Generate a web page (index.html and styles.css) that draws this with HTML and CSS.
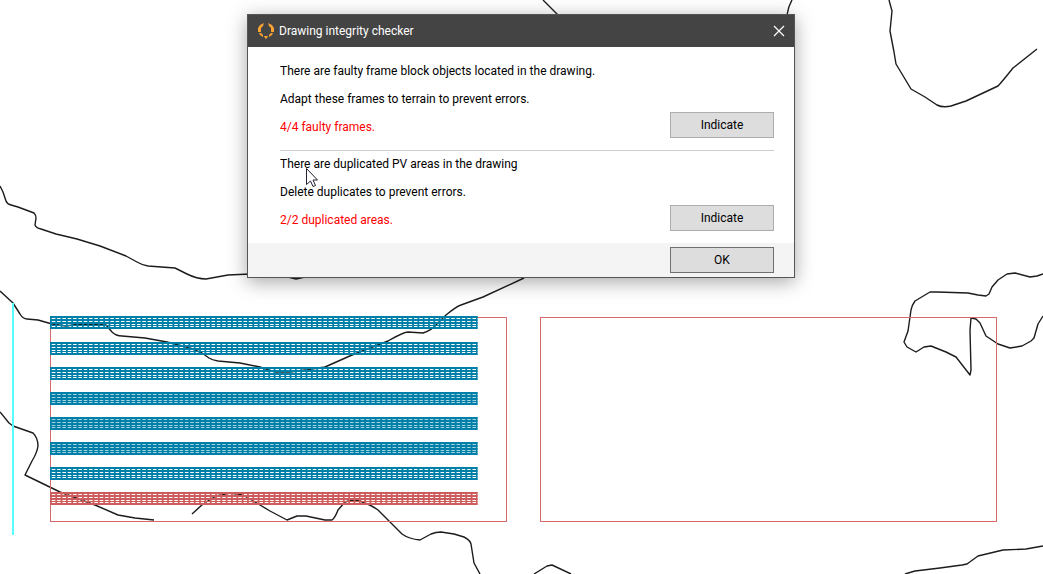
FILE: index.html
```html
<!DOCTYPE html>
<html lang="en">
<head>
<meta charset="utf-8">
<title>Drawing integrity checker</title>
<link rel="stylesheet" href="styles.css">
</head>
<body>
<main class="workspace">
  <svg class="drawing" viewBox="0 0 1043 574" preserveAspectRatio="xMinYMin slice" aria-hidden="true">
    <defs>
      <g id="frames">
        <path d="M50 1H477.500M50 4H477.500M50 7H477.500M50 12H477.500" stroke-width="2"/>
        <path d="M50 9.500H477.500" stroke-width="1"/>
        <path d="M50 6.500H477.500" stroke-width="13" stroke-dasharray="1.800 3.525"/>
      </g>
    </defs>
    <g class="contours">
      <path d="M0 186L3 192 6 201Q7 204 11 205L18 207 34 213Q36 215 36 218L35 225Q36 228 41 229L56 234 77 239 100 246 126 256 137 262Q142 265 148 266L175 268 187 274Q197 279 206 279L228 275 250 274 270 275M288 277L296 279 305 277"/>
      <path d="M0 291L13 303 20 314Q23 319 27 319L38 320 52 324 66 326 80 324 106 325 112 332Q116 336 122 336L145 338 167 342 190 348 202 353 209 358Q212 360 218 361L240 363 260 367 275 372 290 372 305 370 325 367 352 355 388 341Q404 332 408 332L423 333Q432 330 437 324L446 315Q457 306 461 305L483 297 524 278"/>
      <path d="M0 412L9 423 13 426 33 433Q38 438 38 446 37 453 32 461L25 475 60 492 95 505 118 515 135 518 154 520"/>
      <path d="M192 514L203 504 216 496 230 493 243 495 255 502 270 511 287 520 297 516 306 516 325 520 332 520Q335 518 338 510L345 502 352 500 360 501Q371 505 378 510L402 534Q409 539 420 540L431 534Q436 532 441 532L454 534 464 537Q470 540 471 544L474 563 480 574"/>
      <path d="M534 574L547 566 552 565 571 574M543 0L558 15M792 0Q788 7 787 15"/>
      <path d="M889 0L892 11 890 31 894 52 896 64 911 89 925 97 937 105Q943 108 951 106L966 101 998 86Q1001 83 1013 68L1037 49"/>
      <path d="M1043 274L1037 276 1030 277 1015 273 1007 274 998 280 992 287 989 294 986 296 978 295 968 293 937 292 930 292 915 301Q912 305 911 310L908 331 904 342 907 347 916 352 924 347 931 346 946 352 956 357 970 375 971 370 970 330 971 318 976 319 980 323 986 336 998 344 1010 348 1022 346 1031 341 1034 338 1038 324 1043 316"/>
      <path d="M905 574L915 571 940 568 962 565 967 564 978 556 1003 550 1026 549 1043 546"/>
    </g>
    <path class="axis" d="M13 303V535"/>
    <g class="areas">
      <rect x="50.500" y="317.500" width="456" height="204"/>
      <rect x="540.500" y="317.500" width="456" height="204"/>
    </g>
    <g class="tint">
      <path d="M50 392H477V405H50zM50 417H477V430H50zM50 442H477V455H50z"/>
    </g>
    <g class="frames">
      <use href="#frames" y="316"/>
      <use href="#frames" y="342"/>
      <use href="#frames" y="367"/>
      <use href="#frames" y="392"/>
      <use href="#frames" y="417"/>
      <use href="#frames" y="442"/>
      <use href="#frames" y="467"/>
    </g>
    <g class="frames-faulty">
      <use href="#frames" y="492"/>
    </g>
  </svg>

  <section class="dialog" role="dialog" aria-labelledby="dialog-title">
    <header class="titlebar">
      <svg class="logo" viewBox="0 0 16 16" aria-hidden="true">
        <path d="M6 0L5 3 3 5 3 9 0 9 0 5 2 2zM10 0L11 3 13 5 13 9 16 9 16 5 14 2z"/>
        <path d="M1 10L3 10 5 12 5 14 2 12zM15 10L13 10 11 12 11 14 14 12zM6 13H10L9 15 8 16 7 15z"/>
      </svg>
      <h1 class="title" id="dialog-title">Drawing integrity checker</h1>
      <button class="close" type="button" aria-label="Close">
        <svg class="close-icon" viewBox="0 0 10 10" aria-hidden="true"><path d="M0 0L10 10M10 0L0 10"/></svg>
      </button>
    </header>
    <div class="body">
      <section class="check">
        <div class="messages">
          <p>There are faulty frame block objects located in the drawing.</p>
          <p>Adapt these frames to terrain to prevent errors.</p>
          <p class="error">4/4 faulty frames.</p>
        </div>
        <button class="button" type="button">Indicate</button>
      </section>
      <section class="check check-next">
        <div class="messages">
          <p>There are duplicated PV areas in the drawing</p>
          <p>Delete duplicates to prevent errors.</p>
          <p class="error">2/2 duplicated areas.</p>
        </div>
        <button class="button" type="button">Indicate</button>
      </section>
    </div>
    <footer class="footer">
      <button class="button button-default" type="button">OK</button>
    </footer>
  </section>

  <svg class="cursor" viewBox="0 0 13 20" aria-hidden="true">
    <path d="M.5 .5V16.500L4.500 13 7 18.500 9.500 17.500 7 12H11.500z"/>
  </svg>
</main>
</body>
</html>
```
FILE: styles.css
```css
* {
  box-sizing: border-box;
}

body {
  margin: 0;
  background: #fff;
  color: #000;
  font: 12px/16px Roboto, "Open Sans", sans-serif;
}

.workspace {
  position: relative;
  min-height: 100vh;
  overflow: hidden;
}

.drawing {
  position: absolute;
  inset: 0;
  width: 100%;
  height: 100%;
  fill: none;
}

.contours {
  stroke: #1c1c1c;
  stroke-width: 1.4;
  stroke-linejoin: round;
}

.axis {
  stroke: #5ff;
  stroke-width: 2;
}

.areas {
  stroke: #d46a6a;
}

.tint {
  fill: #0080a8;
  fill-opacity: 0.35;
}

.frames {
  stroke: #0080a8;
}

.frames-faulty {
  stroke: #cd5c5c;
}

.dialog {
  position: absolute;
  top: 14px;
  left: 247px;
  width: 548px;
  max-width: 100%;
  border: 1px solid #555;
  background: #fff;
  box-shadow: 0 4px 18px rgba(0, 0, 0, 0.35);
}

.titlebar {
  display: flex;
  align-items: center;
  gap: 5px;
  height: 32px;
  padding: 0 10px;
  background: #444;
  color: #fff;
}

.logo {
  width: 16px;
  height: 16px;
  fill: #f7a233;
}

.title {
  flex: 1;
  margin: 0;
  font-size: 12px;
  font-weight: 400;
}

.close {
  display: flex;
  padding: 0;
  border: 0;
  background: none;
}

.close-icon {
  width: 10px;
  height: 10px;
  overflow: visible;
  fill: none;
  stroke: #fff;
  stroke-width: 1.2;
}

.body {
  padding: 16px 20px 12px 32px;
}

.check {
  display: flex;
  align-items: flex-end;
  justify-content: space-between;
}

.check-next {
  margin-top: 12px;
  padding-top: 5px;
  border-top: 1px solid #ccc;
}

.messages {
  display: grid;
  gap: 12px;
  padding-bottom: 3px;
}

.messages p {
  margin: 0;
}

.error {
  color: #f00;
}

.button {
  width: 104px;
  height: 26px;
  padding: 0;
  border: 1px solid #adadad;
  background: #ddd;
  color: #000;
  font: inherit;
}

.button-default {
  border-color: #707070;
}

.footer {
  display: flex;
  justify-content: flex-end;
  padding: 4px 20px;
  background: #f4f4f4;
}

.cursor {
  position: absolute;
  top: 168px;
  left: 306px;
  width: 13px;
  height: 20px;
  fill: #fff;
  stroke: #223;
}
```
